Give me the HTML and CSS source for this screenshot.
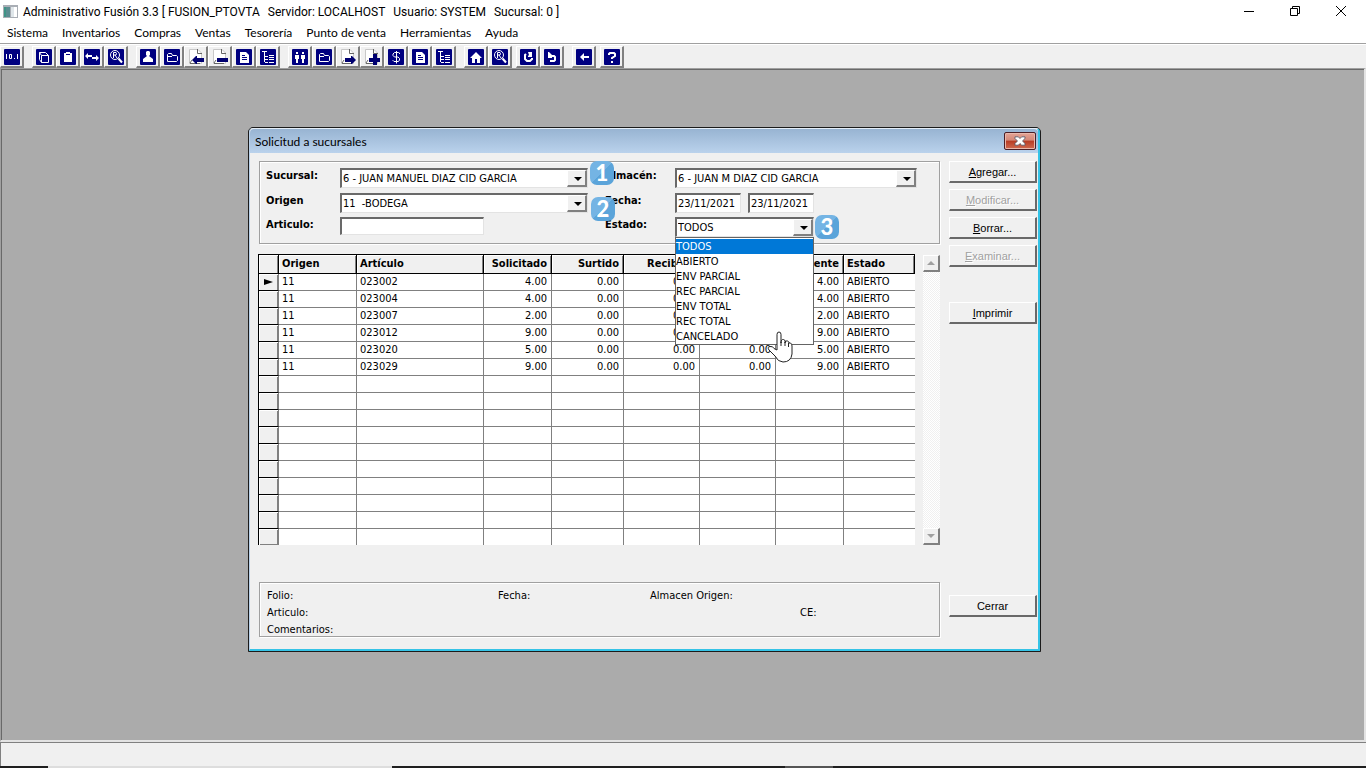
FILE: index.html
```html
<!DOCTYPE html>
<html lang="es">
<head>
  <meta charset="UTF-8" />
  <meta name="viewport" content="width=device-width, initial-scale=1.0"/>
  <title>Administrativo Fusión 3.3</title>
  <link rel="stylesheet" href="styles.css">
</head>
<body>
  <!-- shared toolbar glyphs -->
  <svg class="sprite" aria-hidden="true">
    <symbol id="i-tile" viewBox="0 0 16 16"><rect width="16" height="16" rx="1"/></symbol>
    <symbol id="i-folder" viewBox="0 0 16 16"><path d="M3.5 12.500V5.500L4.500 4.500H7.500L8.500 6.500H12.500L13.500 7.500V11.500L12.500 12.500H3.500M3.500 7.500H8" class="line"/></symbol>
    <symbol id="i-page" viewBox="0 0 16 16"><path d="M4 3h6l3 3v8H4z" fill="#fff"/><path d="M6 6.500h3M6 8.500h5M6 10.500h5" stroke="#000080"/></symbol>
    <symbol id="i-tree" viewBox="0 0 16 16"><path d="M2 2.500h5M4.500 3v10M5 7.500h3M5 10.500h3M5 13.500h3M9 6.500h5M9 8.500h5M9 10.500h5M9 13.500h5" class="line"/></symbol>
    <symbol id="i-find" viewBox="0 0 16 16"><circle cx="7" cy="6" r="4.500" class="line"/><path d="M5.500 9V3.500H8L8.500 4.500L8 6H6M7 6L9 9" class="line"/><path d="M10.500 9.500L14 13.500" stroke="#fff" stroke-width="2"/></symbol>
    <symbol id="i-sheet" viewBox="0 0 16 16"><path d="M1.500 .5H10L13.500 4V14.500H1.500z" fill="#fff" stroke="#c8c8c8"/><path d="M9.500 0V4.500H14M2 14.500H12M4 11L2 14" fill="none" stroke="#666"/></symbol>
  </svg>

  <header class="titlebar">
    <svg class="app-icon" viewBox="0 0 15 13" aria-hidden="true">
      <rect x="0" y="0" width="15" height="13" fill="#a9aeb5"/>
      <rect x="1" y="2" width="6" height="10" fill="#3f9486"/>
      <rect x="3" y="2" width="4" height="10" fill="#5b8d91"/>
      <rect x="8" y="2" width="3" height="10" fill="#dfe6ea"/>
      <rect x="11" y="2" width="3" height="10" fill="#fff"/>
    </svg>
    <h1 class="app-title">
      <span>Administrativo Fusión 3.3 [ FUSION_PTOVTA</span>
      <span>Servidor: LOCALHOST</span>
      <span>Usuario: SYSTEM</span>
      <span>Sucursal: 0 ]</span>
    </h1>
    <div class="window-buttons">
      <button aria-label="Minimizar"><svg viewBox="0 0 12 12"><path d="M1 6.500h10"/></svg></button>
      <button aria-label="Restaurar"><svg viewBox="0 0 12 12"><path d="M1.500 3.500h7v7h-7zM3.500 3V1.500h7v7H9"/></svg></button>
      <button aria-label="Cerrar ventana"><svg viewBox="0 0 12 12"><path d="M1 1l10 10M11 1L1 11"/></svg></button>
    </div>
  </header>

  <nav class="menubar">
    <a href="#">Sistema</a>
    <a href="#">Inventarios</a>
    <a href="#">Compras</a>
    <a href="#">Ventas</a>
    <a href="#">Tesorería</a>
    <a href="#">Punto de venta</a>
    <a href="#">Herramientas</a>
    <a href="#">Ayuda</a>
  </nav>

  <div class="toolbar">
    <div class="tool-group">
      <button aria-label="Numeración"><svg viewBox="0 0 16 16"><use href="#i-tile"/><path class="line" d="M2.500 5v5M5.500 5.500h2v4h-2zM10 9.500h1M13.500 5v5"/></svg></button>
    </div>
    <div class="tool-group">
      <button aria-label="Artículos"><svg viewBox="0 0 16 16"><use href="#i-tile"/><path class="line" d="M5.500 6.500h7v7h-7zM3.500 10.500v-7h6l3 3M3.500 3.500l2 3M3.500 10.500l2 3"/></svg></button>
      <button aria-label="Inventario"><svg viewBox="0 0 16 16"><use href="#i-tile"/><path d="M4 4h2V3h4v1h2v9H4z" fill="#fff"/><path d="M6 5.500h4" stroke="#000080"/></svg></button>
      <button aria-label="Traspasos"><svg viewBox="0 0 16 16"><use href="#i-tile"/><path d="M1 7l3-3v2h4v2H4v2zM15 9l-3-3v2H8v2h4v2z" fill="#fff"/></svg></button>
      <button aria-label="Buscar artículo"><svg viewBox="0 0 16 16"><use href="#i-tile"/><use href="#i-find"/></svg></button>
    </div>
    <div class="tool-group">
      <button aria-label="Proveedores"><svg viewBox="0 0 16 16"><use href="#i-tile"/><path d="M6 3l1-1h2l1 1v3L9 7l4 3v3H3v-3l4-3-1-1z" fill="#fff"/></svg></button>
      <button aria-label="Abrir compra"><svg viewBox="0 0 16 16"><use href="#i-tile"/><use href="#i-folder"/></svg></button>
      <button aria-label="Entrada"><svg viewBox="0 0 16 16"><use href="#i-sheet"/><path class="navy" d="M4 11l4-4h1v2h7v4H9v2H8z"/></svg></button>
      <button aria-label="Salida"><svg viewBox="0 0 16 16"><use href="#i-sheet"/><path class="navy" d="M5 9h11v4H5z"/></svg></button>
      <button aria-label="Documento de compra"><svg viewBox="0 0 16 16"><use href="#i-tile"/><use href="#i-page"/></svg></button>
      <button aria-label="Árbol de compras"><svg viewBox="0 0 16 16"><use href="#i-tile"/><use href="#i-tree"/></svg></button>
    </div>
    <div class="tool-group">
      <button aria-label="Clientes"><svg viewBox="0 0 16 16"><use href="#i-tile"/><path d="M4 3h2v2H4zM10 3h2v2h-2zM3 6h4v4H6v4H4v-4H3zM9 6h4v4h-1v4h-2v-4H9z" fill="#fff"/></svg></button>
      <button aria-label="Abrir venta"><svg viewBox="0 0 16 16"><use href="#i-tile"/><use href="#i-folder"/></svg></button>
      <button aria-label="Enviar"><svg viewBox="0 0 16 16"><use href="#i-sheet"/><path class="navy" d="M16 11l-4-4h-1v2H5v4h6v2h1z"/></svg></button>
      <button aria-label="Nuevo"><svg viewBox="0 0 16 16"><use href="#i-sheet"/><path class="navy" d="M9 5h4v4h3v4h-3v3H9v-3H5V9h4z"/></svg></button>
      <button aria-label="Cobrar"><svg viewBox="0 0 16 16"><use href="#i-tile"/><path class="line" d="M11.500 5V4L10.500 3.500H6.500L5 5v1.500L6.500 8h3.500L11.500 9.500V11L10.500 12.500H6L5 11.500V11M8.500 2v12.500"/></svg></button>
      <button aria-label="Documento de venta"><svg viewBox="0 0 16 16"><use href="#i-tile"/><use href="#i-page"/></svg></button>
      <button aria-label="Árbol de ventas"><svg viewBox="0 0 16 16"><use href="#i-tile"/><use href="#i-tree"/></svg></button>
    </div>
    <div class="tool-group">
      <button aria-label="Inicio"><svg viewBox="0 0 16 16"><use href="#i-tile"/><path d="M8 3l6 6h-2v5H9v-4H7v4H4V9H2z" fill="#fff"/></svg></button>
      <button aria-label="Buscar"><svg viewBox="0 0 16 16"><use href="#i-tile"/><use href="#i-find"/></svg></button>
    </div>
    <div class="tool-group narrow">
      <button aria-label="Actualizar"><svg viewBox="0 0 16 16"><use href="#i-tile"/><path class="thick" d="M6 5L5 6v4l2 2h3l2-2V9"/><path d="M8 3h4v5H8V7l1-1z" fill="#fff"/></svg></button>
      <button aria-label="Deshacer"><svg viewBox="0 0 16 16"><use href="#i-tile"/><path class="thick" d="M6 7h4l1 1v3l-1 1H6"/><path d="M4 3h1l3 3v3H4z" fill="#fff"/></svg></button>
    </div>
    <div class="tool-group">
      <button aria-label="Regresar"><svg viewBox="0 0 16 16"><use href="#i-tile"/><path d="M4 8l4-4v3h5v2H8v3z" fill="#fff"/></svg></button>
    </div>
    <div class="tool-group narrow">
      <button aria-label="Ayuda en línea"><svg viewBox="0 0 16 16"><use href="#i-tile"/><path class="thick" d="M5 6V5l1-1h4l1 1v2L8 9v1M8 12v2"/></svg></button>
    </div>
  </div>

  <main class="desktop">
    <section class="dialog" aria-labelledby="dialog-title">
      <div class="dialog-frame">
        <div class="dialog-title">
          <h2 id="dialog-title">Solicitud a sucursales</h2>
          <button class="close" aria-label="Cerrar diálogo">
            <svg viewBox="0 0 14 12"><path d="M1 1h4l2 2 2-2h4v2l-3 3 3 3v2H9L7 9l-2 2H1V9l3-3-3-3z"/></svg>
          </button>
        </div>

        <div class="dialog-body">
          <div class="content">
            <form class="panel filters">
              <label for="sucursal">Sucursal:</label>
              <span class="combo wide"><select id="sucursal"><option>6 - JUAN MANUEL DIAZ CID GARCIA</option></select></span>
              <label for="almacen">Almacén:</label>
              <span class="combo medium"><select id="almacen"><option>6 - JUAN M DIAZ CID GARCIA</option></select></span>

              <label for="origen">Origen</label>
              <span class="combo wide"><select id="origen"><option>11&nbsp; -BODEGA</option></select></span>
              <label for="fecha-inicio">Fecha:</label>
              <span class="dates">
                <input type="text" id="fecha-inicio" value="23/11/2021">
                <input type="text" aria-label="Fecha final" value="23/11/2021">
              </span>

              <label for="articulo">Articulo:</label>
              <input class="article" type="text" id="articulo">
              <label for="estado">Estado:</label>
              <span class="combo state">
                <select id="estado">
                  <option>TODOS</option>
                  <option>ABIERTO</option>
                  <option>ENV PARCIAL</option>
                  <option>REC PARCIAL</option>
                  <option>ENV TOTAL</option>
                  <option>REC TOTAL</option>
                  <option>CANCELADO</option>
                </select>
                <ul class="options">
                  <li class="selected">TODOS</li>
                  <li>ABIERTO</li>
                  <li>ENV PARCIAL</li>
                  <li>REC PARCIAL</li>
                  <li>ENV TOTAL</li>
                  <li>REC TOTAL</li>
                  <li>CANCELADO</li>
                </ul>
                <svg class="pointer" viewBox="0 0 26 32" aria-hidden="true"><path d="M10 19V3.500Q10 1 12 1T14 3.500V12Q14 8 16.500 8.500T18 12Q18 9 20.500 10T21.500 13Q22 11 23.500 12T25 15V23Q24 31 16 31Q11 31 8 25L2 19Q0 16 3 15.500T7 17.500L10 19M14 11v4M18 11v4M21.500 12v4"/></svg>
              </span>
              <span class="badge one">1</span>
              <span class="badge two">2</span>
              <span class="badge three">3</span>
            </form>

            <div class="grid-area">
              <table class="grid">
                <colgroup>
                  <col class="c-mark"><col class="c-origin"><col class="c-article"><col class="c-req"><col class="c-sup">
                  <col class="c-rec"><col class="c-rec"><col class="c-req"><col>
                </colgroup>
                <thead>
                  <tr><th></th><th>Origen</th><th>Artículo</th><th class="num">Solicitado</th><th class="num">Surtido</th><th class="num">Recibido</th><th class="num">Enviado</th><th class="num">Pendiente</th><th>Estado</th></tr>
                </thead>
                <tbody>
                  <tr><th><span class="current"></span></th><td>11</td><td>023002</td><td class="num">4.00</td><td class="num">0.00</td><td class="num">0.00</td><td class="num">0.00</td><td class="num">4.00</td><td>ABIERTO</td></tr>
                  <tr><th></th><td>11</td><td>023004</td><td class="num">4.00</td><td class="num">0.00</td><td class="num">0.00</td><td class="num">0.00</td><td class="num">4.00</td><td>ABIERTO</td></tr>
                  <tr><th></th><td>11</td><td>023007</td><td class="num">2.00</td><td class="num">0.00</td><td class="num">0.00</td><td class="num">0.00</td><td class="num">2.00</td><td>ABIERTO</td></tr>
                  <tr><th></th><td>11</td><td>023012</td><td class="num">9.00</td><td class="num">0.00</td><td class="num">0.00</td><td class="num">0.00</td><td class="num">9.00</td><td>ABIERTO</td></tr>
                  <tr><th></th><td>11</td><td>023020</td><td class="num">5.00</td><td class="num">0.00</td><td class="num">0.00</td><td class="num">0.00</td><td class="num">5.00</td><td>ABIERTO</td></tr>
                  <tr><th></th><td>11</td><td>023029</td><td class="num">9.00</td><td class="num">0.00</td><td class="num">0.00</td><td class="num">0.00</td><td class="num">9.00</td><td>ABIERTO</td></tr>
                  <tr><th></th><td></td><td></td><td></td><td></td><td></td><td></td><td></td><td></td></tr>
                  <tr><th></th><td></td><td></td><td></td><td></td><td></td><td></td><td></td><td></td></tr>
                  <tr><th></th><td></td><td></td><td></td><td></td><td></td><td></td><td></td><td></td></tr>
                  <tr><th></th><td></td><td></td><td></td><td></td><td></td><td></td><td></td><td></td></tr>
                  <tr><th></th><td></td><td></td><td></td><td></td><td></td><td></td><td></td><td></td></tr>
                  <tr><th></th><td></td><td></td><td></td><td></td><td></td><td></td><td></td><td></td></tr>
                  <tr><th></th><td></td><td></td><td></td><td></td><td></td><td></td><td></td><td></td></tr>
                  <tr><th></th><td></td><td></td><td></td><td></td><td></td><td></td><td></td><td></td></tr>
                  <tr><th></th><td></td><td></td><td></td><td></td><td></td><td></td><td></td><td></td></tr>
                  <tr><th></th><td></td><td></td><td></td><td></td><td></td><td></td><td></td><td></td></tr>
                </tbody>
              </table>
              <div class="scrollbar">
                <button aria-label="Subir"><svg viewBox="0 0 8 4"><path d="M0 4l4-4 4 4z"/></svg></button>
                <button aria-label="Bajar"><svg viewBox="0 0 8 4"><path d="M0 0h8l-4 4z"/></svg></button>
              </div>
            </div>

            <div class="panel details">
              <span>Folio:</span>
              <span>Fecha:</span>
              <span class="span-two">Almacen Origen:</span>
              <span class="span-three">Articulo:</span>
              <span>CE:</span>
              <span>Comentarios:</span>
            </div>
          </div>

          <div class="actions">
            <button><u>A</u>gregar...</button>
            <button disabled><u>M</u>odificar...</button>
            <button><u>B</u>orrar...</button>
            <button disabled><u>E</u>xaminar...</button>
            <button class="print"><u>I</u>mprimir</button>
            <button class="exit">Cerrar</button>
          </div>
        </div>
      </div>
    </section>
  </main>

  <footer class="statusbar"></footer>
  <div class="taskbar"></div>
</body>
</html>
```

FILE: styles.css
```css
* {
  box-sizing: border-box;
}

body {
  margin: 0;
  height: 100vh;
  display: flex;
  flex-direction: column;
  overflow: hidden;
  background: #fff;
  color: #000;
  font-family: "DejaVu Sans Condensed", "Noto Sans", sans-serif;
  font-size: 11px;
  line-height: 14px;
}

button,
input,
select {
  font: inherit;
  color: inherit;
  margin: 0;
  padding: 0;
  border: 0;
  border-radius: 0;
}

h1,
h2 {
  margin: 0;
  font-weight: normal;
}

.sprite {
  display: none;
}

/* main window */
.titlebar {
  display: flex;
  align-items: center;
  height: 22px;
  padding: 0 2px 0 3px;
  font-family: Roboto, "Noto Sans", sans-serif;
}

.menubar,
.dialog-title {
  font-family: Lato, "Noto Sans", sans-serif;
}

.app-icon {
  width: 15px;
  height: 13px;
}

.app-title {
  display: flex;
  gap: 8px;
  margin-left: 5px;
  padding-top: 2px;
  font-size: 12px;
  white-space: nowrap;
}

.window-buttons {
  display: flex;
  margin-left: auto;
}

.window-buttons button {
  display: grid;
  place-items: center;
  width: 46px;
  height: 22px;
  background: none;
}

.window-buttons svg {
  width: 12px;
  height: 12px;
  fill: none;
  stroke: #000;
}

.menubar {
  display: flex;
  align-items: center;
  gap: 14px;
  height: 21px;
  padding-left: 7px;
  font-size: 12px;
}

.menubar a {
  color: #000;
  text-decoration: none;
}

.toolbar {
  display: flex;
  gap: 8px;
  height: 25px;
  padding-top: 2px;
  background: #f0f0f0;
  border-top: 1px solid #a0a0a0;
  box-shadow: inset 0 1px #fff;
}

.tool-group {
  display: flex;
}

.tool-group.narrow {
  margin-left: -4px;
}

.tool-group button {
  display: grid;
  place-items: center;
  width: 24px;
  height: 22px;
  background: #f0f0f0;
  border: 1px solid #fff;
  border-right: 2px solid #808080;
  border-bottom: 2px solid #808080;
}

.tool-group svg {
  width: 16px;
  height: 16px;
  fill: #000080;
}

.line {
  fill: none;
  stroke: #fff;
}

.thick {
  fill: none;
  stroke: #fff;
  stroke-width: 2;
}

.navy {
  fill: #000070;
}

.desktop {
  flex: 1;
  position: relative;
  background: #ababab;
  border-style: solid;
  border-width: 1px 2px 2px 1px;
  border-color: #a0a0a0 #e3e3e3 #e3e3e3 #a0a0a0;
  box-shadow: inset 1px 1px #696969;
}

.statusbar {
  height: 24px;
  background: #f0f0f0;
  border-top: 1px solid #808080;
  border-left: 1px solid #808080;
}

.taskbar {
  height: 2px;
  background: linear-gradient(90deg, #1f1f1f 48px, #ddd 48px, #ddd 392px, #1f1f1f 392px, #1f1f1f 785px, #555 785px, #555 833px, #1f1f1f 833px);
}

/* dialog */
.dialog {
  position: absolute;
  left: 247px;
  top: 58px;
  width: 793px;
  border: 1px solid #1b1b1b;
  border-radius: 5px 5px 0 0;
  background: #1b1b1b;
}

.dialog-frame {
  background: #f0f0f0;
  border: 1px solid #b9d1ea;
  border-top: 1px solid #e4eef8;
  border-right: 2px solid #35c3e6;
  border-bottom: 2px solid #35c3e6;
  border-radius: 4px 4px 0 0;
}

.dialog-title {
  display: flex;
  align-items: center;
  justify-content: space-between;
  height: 24px;
  padding: 0 2px 0 5px;
  background: linear-gradient(#98b4d2, #bad2ec);
  border-radius: 4px 4px 0 0;
}

.dialog-title h2 {
  padding-top: 2px;
  font-size: 12px;
}

.close {
  display: grid;
  place-items: center;
  width: 32px;
  height: 18px;
  border: 1px solid #4b1f26;
  border-radius: 2px;
  background: linear-gradient(#e5a496, #d48878 45%, #b83c24 50%, #cf6a50);
  box-shadow: inset 0 0 0 1px #e9b8ac;
}

.close svg {
  width: 12px;
  height: 10px;
  fill: #fff;
  stroke: #535666;
}

.dialog-body {
  display: flex;
  gap: 9px;
  padding: 8px 1px 12px 8px;
}

.content {
  flex: 1;
  min-width: 0;
}

.panel {
  margin-left: 1px;
  border: 1px solid #a0a0a0;
  box-shadow: 1px 1px #fff, inset 1px 1px #fff;
}

.filters {
  position: relative;
  display: grid;
  grid-template-columns: 74px 265px 70px 1fr;
  grid-template-rows: 25px 24px 20px;
  height: 83px;
  padding: 6px 0 0 6px;
  align-items: start;
}

.filters label {
  font-weight: bold;
  line-height: 16px;
}

.combo,
.filters input {
  height: 20px;
  background: #fff;
  border-style: solid;
  border-width: 2px 1px 1px 2px;
  border-color: #696969 #e3e3e3 #e3e3e3 #696969;
  outline: none;
}

.combo {
  position: relative;
  display: flex;
}

/* drop-down button and its arrow */
.combo::after {
  content: "";
  width: 17px;
  background: #f0f0f0;
  border: 1px solid #fff;
  border-right: 2px solid #808080;
  border-bottom: 2px solid #808080;
  pointer-events: none;
}

.combo::before {
  content: "";
  position: absolute;
  right: 5px;
  top: 7px;
  border: 4px solid transparent;
  border-top-color: #000;
  border-bottom: 0;
  pointer-events: none;
}

.combo select {
  flex: 1;
  min-width: 0;
  padding-left: 1px;
  background: #fff;
  appearance: none;
  outline: none;
}

.combo.wide {
  width: 248px;
}

.combo.medium {
  width: 242px;
}

.combo.state {
  width: 139px;
}

.dates {
  display: flex;
  gap: 7px;
}

.dates input {
  width: 66px;
  padding-left: 1px;
}

.filters .article {
  width: 144px;
  height: 18px;
}

.options {
  position: absolute;
  z-index: 2;
  left: -2px;
  top: 18px;
  width: 139px;
  margin: 0;
  padding: 1px 0 0;
  list-style: none;
  background: #fff;
  border: 1px solid #646464;
}

.options li {
  height: 15px;
  line-height: 15px;
}

.options .selected {
  background: #0078d7;
  color: #fff;
}

.pointer {
  position: absolute;
  z-index: 3;
  left: 90px;
  top: 112px;
  width: 26px;
  height: 32px;
  fill: #fff;
  stroke: #222;
  stroke-width: 1;
}

.badge {
  position: absolute;
  z-index: 1;
  width: 24px;
  height: 24px;
  border-radius: 7px;
  background: linear-gradient(135deg, #74b4e4 50%, #5ba4da 50%);
  color: #fff;
  font-family: Lato, sans-serif;
  font-size: 22px;
  font-weight: 900;
  line-height: 23px;
  text-align: center;
}

.badge.one {
  left: 330px;
  top: -1px;
}

.badge.two {
  left: 331px;
  top: 35px;
}

.badge.three {
  left: 555px;
  top: 53px;
}

.grid-area {
  display: flex;
  gap: 8px;
  margin-top: 10px;
}

.grid {
  flex: 1;
  table-layout: fixed;
  border-collapse: separate;
  border-spacing: 0;
  border-top: 1px solid #000;
  border-left: 1px solid #000;
  background: #fff;
}

.c-mark {
  width: 20px;
}

.c-origin {
  width: 78px;
}

.c-article {
  width: 127px;
}

.c-req {
  width: 68px;
}

.c-sup {
  width: 72px;
}

.c-rec {
  width: 76px;
}

.grid th,
.grid td {
  height: 17px;
  padding: 0 4px 0 3px;
  line-height: 14px;
  text-align: left;
  white-space: nowrap;
  border-right: 1px solid #808080;
  border-bottom: 1px solid #808080;
}

.grid .num {
  text-align: right;
}

.grid thead th {
  height: 19px;
  background: #f0f0f0;
  border-right-color: #000;
  border-bottom-color: #000;
  box-shadow: inset 1px 1px #fff, inset -1px 0 #808080;
}

.grid tbody th {
  padding: 0;
  background: #f0f0f0;
  border-bottom-color: #000;
  box-shadow: inset 1px 1px #fff, inset -1px 0 #808080;
}

.grid td:last-child {
  border-right: 0;
}

.grid tbody tr:last-child > * {
  height: 16px;
  border-bottom: 0;
}

.grid tbody tr:last-child > th {
  box-shadow: inset 1px 1px #fff, inset -1px -1px #808080;
}

.current {
  display: block;
  width: 0;
  margin-left: 5px;
  border: 3px solid transparent;
  border-left: 9px solid #000;
  border-right: 0;
}

.scrollbar {
  display: flex;
  flex-direction: column;
  justify-content: space-between;
  width: 17px;
  margin-top: 1px;
  background: repeating-conic-gradient(#fff 0 25%, #f0f0f0 0 50%) 0 0 / 2px 2px;
}

.scrollbar button {
  display: grid;
  place-items: center;
  width: 17px;
  height: 17px;
  background: #f0f0f0;
  border: 1px solid #fff;
  border-right: 2px solid #808080;
  border-bottom: 2px solid #808080;
}

.scrollbar svg {
  width: 8px;
  height: 4px;
  fill: #a0a0a0;
}

.details {
  display: grid;
  grid-template-columns: 231px 152px 150px 1fr;
  grid-auto-rows: 12px;
  row-gap: 5px;
  height: 55px;
  margin-top: 37px;
  padding: 7px 0 0 7px;
  line-height: 12px;
}

.span-two {
  grid-column: span 2;
}

.span-three {
  grid-column: span 3;
}

.actions {
  display: flex;
  flex-direction: column;
  gap: 6px;
  width: 88px;
  padding-bottom: 20px;
}

.actions button {
  height: 22px;
  font-family: "Liberation Sans", Arial, sans-serif;
  font-size: 11px;
  background: #f0f0f0;
  border: 1px solid #fff;
  border-right: 2px solid #696969;
  border-bottom: 2px solid #696969;
}

.actions button:disabled {
  color: #a0a0a0;
  text-shadow: 1px 1px #fff;
}

.actions .print {
  margin-top: 29px;
}

.actions .exit {
  margin-top: auto;
}
```
